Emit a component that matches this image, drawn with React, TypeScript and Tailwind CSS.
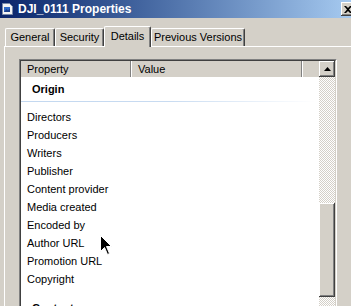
import React from "react";

const items = [
  "Directors",
  "Producers",
  "Writers",
  "Publisher",
  "Content provider",
  "Media created",
  "Encoded by",
  "Author URL",
  "Promotion URL",
  "Copyright",
];

function Tab({ label, w }: { label: string; w: string }) {
  return (
    <div
      className={`${w} h-[18px] flex items-center justify-center border-t border-l border-white rounded-tl-[2px] shadow-[inset_-1px_0_#808080] border-r border-r-[#404040] rounded-tr-[2px] text-black`}
    >
      {label}
    </div>
  );
}

export default function App() {
  return (
    <div className="w-[351px] h-[306px] overflow-hidden bg-[#d4d0c8] relative font-['Liberation_Sans',Arial,sans-serif] text-[11px] leading-none text-black">
      {/* Title bar */}
      <div className="h-[18px] flex items-center bg-gradient-to-r from-[#0a246a] to-[#a6caf0]">
        <svg width="11" height="12" viewBox="0 0 11 12" className="ml-[2px] shrink-0">
          <path d="M0.5 0.5 H7.5 L10.5 3.5 V11.5 H0.5 Z" fill="#f4f4f4" stroke="#7a8aa8" />
          <rect x="2" y="4" width="6" height="5" fill="#2f6ac8" />
          <path d="M2 9 L4.5 6 L6 7.5 L8 5.5 V9 Z" fill="#1c3f8a" />
        </svg>
        <span className="ml-[5px] text-white font-bold text-[12px] whitespace-nowrap">DJI_0111 Properties</span>
        <div className="flex-1" />
        <div className="shrink-0 w-[16px] h-[14px] -mr-[6px] bg-[#d4d0c8] shadow-[inset_-1px_-1px_#404040,inset_1px_1px_#ffffff,inset_-2px_-2px_#808080] flex items-center pl-[3px]">
          <svg width="8" height="7" viewBox="0 0 8 7">
            <path d="M0 0 H2 L4 2 L6 0 H8 L5 3.5 L8 7 H6 L4 5 L2 7 H0 L3 3.5 Z" fill="#000" />
          </svg>
        </div>
      </div>

      {/* Tab strip */}
      <div className="h-[28px] flex items-end pl-[5px] relative z-10">
        <Tab label="General" w="w-[50px]" />
        <Tab label="Security" w="w-[49px]" />
        <div className="w-[47px] h-[21px] -mb-px bg-[#d4d0c8] flex items-start justify-center pt-[4px] border-t border-l border-white rounded-tl-[2px] border-r border-r-[#404040] shadow-[inset_-1px_0_#808080] rounded-tr-[2px]">
          Details
        </div>
        <Tab label="Previous Versions" w="w-[94px]" />
      </div>

      {/* Panel */}
      <div className="ml-[4px] h-[300px] border-t border-l border-white">
        <div className="mt-[12px] ml-[14px] w-[318px] border border-t-[#808080] border-l-[#808080] border-r-white border-b-white">
          <div className="border border-t-[#404040] border-l-[#404040] border-r-[#d4d0c8] border-b-[#d4d0c8] bg-white flex h-[260px]">
            {/* content */}
            <div className="flex-1 flex flex-col">
              <div className="h-[16px] flex bg-[#d4d0c8] shrink-0">
                <div className="w-[110px] border-r border-[#808080] flex items-center pl-[6px]">Property</div>
                <div className="w-[171px] border-l border-white border-r border-r-[#808080] flex items-center pl-[6px]">Value</div>
                <div className="flex-1 border-l border-white" />
              </div>
              <div className="h-[24px] flex items-center pl-[11px] font-bold shrink-0">Origin</div>
              <div className="h-px mr-[4px] bg-gradient-to-r from-[#c3d8f0] via-[#c8dbf1] to-white shrink-0" />
              <div className="h-[6px] shrink-0" />
              {items.map((t) => (
                <div key={t} className="h-[18px] flex items-center pl-[6px] shrink-0 whitespace-nowrap">
                  {t}
                </div>
              ))}
              <div className="h-[8px] shrink-0" />
              <div className="h-[24px] flex items-center pl-[11px] font-bold shrink-0">Content</div>
            </div>
            {/* scrollbar */}
            <div className="w-[16px] flex flex-col shrink-0">
              <div className="h-[16px] bg-[#d4d0c8] shadow-[inset_-1px_-1px_#404040,inset_1px_1px_#ffffff,inset_-2px_-2px_#808080] flex items-center justify-center shrink-0">
                <svg width="7" height="4" viewBox="0 0 7 4">
                  <path d="M3.5 0 L7 4 H0 Z" fill="#000" />
                </svg>
              </div>
              <div className="h-[126px] shrink-0 bg-[image:repeating-conic-gradient(#ffffff_0_25%,#d4d0c8_0_50%)] bg-[length:2px_2px]" />
              <div className="h-[94px] shrink-0 bg-[#d4d0c8] shadow-[inset_-1px_-1px_#404040,inset_1px_1px_#ffffff,inset_-2px_-2px_#808080]" />
              <div className="flex-1 bg-[image:repeating-conic-gradient(#ffffff_0_25%,#d4d0c8_0_50%)] bg-[length:2px_2px]" />
            </div>
          </div>
        </div>
      </div>

      {/* Mouse cursor */}
      <svg width="13" height="21" viewBox="0 0 13 21" className="absolute left-[100px] top-[235px]">
        <path d="M0.5 0.5 V16.5 L4.5 12.5 L7.5 19.5 L9.5 18.5 L6.5 11.5 H11.5 Z" fill="#000" stroke="#fff" strokeWidth="1" />
      </svg>
    </div>
  );
}
